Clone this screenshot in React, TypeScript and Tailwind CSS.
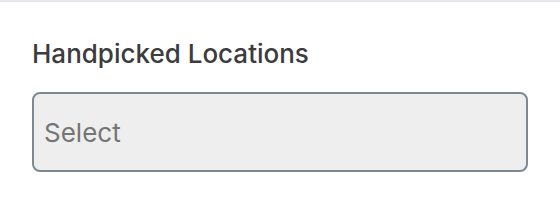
import React from "react";

export default function App() {
  return (
    <div className="w-[560px] h-[204px] bg-white border-t-2 border-[#e6e6ee] px-8 pt-[34px] overflow-hidden" style={{ fontFamily: "Inter, 'Noto Sans', sans-serif" }}>
      <div className="text-[26px] leading-[36px] font-medium text-[#3c3c3c]">Handpicked Locations</div>
      <div className="mt-[20px] h-[80px] w-[496px] rounded-[8px] border-2 border-[#7f8992] bg-[#eeeeee] flex items-center px-[10px]">
        <span className="text-[26px] text-[#757575]">Select</span>
      </div>
    </div>
  );
}
